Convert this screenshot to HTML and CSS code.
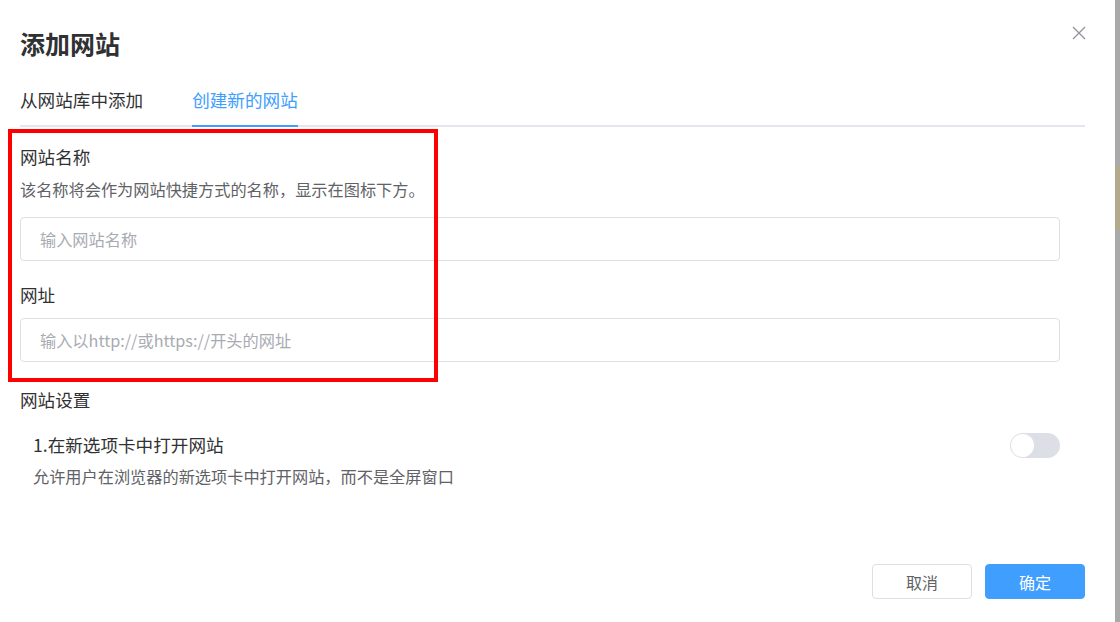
FILE: index.html
```html
<!DOCTYPE html>
<html lang="zh-CN">
<head>
    <meta charset="UTF-8">
    <title>添加网站</title>
    <link rel="stylesheet" href="styles.css">
</head>
<body>
    <div class="dialog">
        <div class="dialog-header">
            <h2 class="dialog-title">添加网站</h2>
            <span class="close">
                <svg width="14" height="14" viewBox="0 0 14 14"><path d="M1 1L13 13M13 1L1 13" stroke="#909399" stroke-width="1.3" fill="none"/></svg>
            </span>
        </div>

        <div class="tabs">
            <div class="tab">从网站库中添加</div>
            <div class="tab active">创建新的网站</div>
        </div>

        <div class="form">
            <div class="form-group">
                <label class="label">网站名称</label>
                <div class="desc">该名称将会作为网站快捷方式的名称，显示在图标下方。</div>
                <input type="text" class="input" placeholder="输入网站名称">
            </div>

            <div class="form-group">
                <label class="label">网址</label>
                <input type="text" class="input" placeholder="输入以http://或https://开头的网址">
            </div>

            <div class="section-title">网站设置</div>

            <div class="setting">
                <div class="setting-text">
                    <div class="setting-name">1.在新选项卡中打开网站</div>
                    <div class="setting-desc">允许用户在浏览器的新选项卡中打开网站，而不是全屏窗口</div>
                </div>
                <div class="switch"><span class="knob"></span></div>
            </div>
        </div>

        <div class="footer">
            <button class="btn">取消</button>
            <button class="btn primary">确定</button>
        </div>

        <!-- annotation box -->
        <div class="highlight"></div>
    </div>
    <div class="backdrop-mark"></div>
</body>
</html>
```

FILE: styles.css
```css
body {
    margin: 0;
    background-color: #a9a9a9;
    font-family: "Microsoft YaHei", "Noto Sans CJK SC", sans-serif;
    color: #303133;
    overflow: hidden;
}

.dialog {
    position: relative;
    width: 1115px;
    height: 622px;
    background-color: #fff;
    box-sizing: border-box;
    padding: 0 30px 0 20px;
}

.dialog-header {
    display: flex;
    justify-content: space-between;
    align-items: flex-start;
    padding-top: 26px;
}

.dialog-title {
    margin: 0;
    font-size: 25px;
    font-weight: bold;
    line-height: 34px;
    color: #303133;
}

.close {
    margin-top: -5px;
    margin-right: -1px;
    cursor: pointer;
}

.tabs {
    display: flex;
    gap: 49px;
    margin-top: 27px;
    border-bottom: 2px solid #e4e7ed;
}

.tab {
    font-size: 17.6px;
    line-height: 26px;
    padding-bottom: 12px;
    margin-bottom: -2px;
    border-bottom: 2px solid transparent;
    color: #303133;
}

.tab.active {
    color: #409eff;
    border-bottom-color: #409eff;
}

.form {
    padding-right: 25px;
}

.form-group {
    margin-top: 17px;
}

.label {
    display: block;
    font-size: 17.6px;
    line-height: 26px;
    color: #303133;
}

.desc {
    margin-top: 8px;
    font-size: 16.2px;
    line-height: 22px;
    color: #606266;
}

.input {
    display: block;
    width: 100%;
    box-sizing: border-box;
    height: 44px;
    margin-top: 17px;
    padding: 0 19px;
    border: 1px solid #dcdfe6;
    border-radius: 4px;
    font-family: inherit;
    font-size: 16.2px;
    color: #606266;
    outline: none;
}

.form-group + .form-group {
    margin-top: 21px;
}

.form-group + .form-group .input {
    margin-top: 10px;
}

.input::placeholder {
    color: #a8abb2;
}

.section-title {
    margin-top: 25px;
    font-size: 17.6px;
    line-height: 26px;
    color: #303133;
}

.setting {
    display: flex;
    justify-content: space-between;
    align-items: flex-start;
    padding-left: 13px;
    margin-top: 19px;
}

.setting-name {
    font-size: 17.6px;
    line-height: 26px;
    color: #303133;
}

.setting-desc {
    margin-top: 7px;
    font-size: 16.2px;
    line-height: 22px;
    color: #606266;
}

.switch {
    position: relative;
    width: 50px;
    height: 25px;
    margin-top: 1px;
    border-radius: 13px;
    background-color: #dcdfe6;
}

.knob {
    position: absolute;
    left: 1px;
    top: 1px;
    width: 23px;
    height: 23px;
    border-radius: 50%;
    background-color: #fff;
}

.footer {
    position: absolute;
    right: 30px;
    bottom: 23px;
    display: flex;
    gap: 13px;
}

.btn {
    width: 100px;
    height: 35px;
    border: 1px solid #dcdfe6;
    border-radius: 4px;
    background-color: #fff;
    color: #606266;
    font-family: inherit;
    font-size: 16px;
    cursor: pointer;
}

.btn.primary {
    background-color: #409eff;
    border-color: #409eff;
    color: #fff;
}

.highlight {
    position: absolute;
    left: 8px;
    top: 129px;
    width: 422px;
    height: 245px;
    border: 4px solid #ff0000;
    pointer-events: none;
}

.backdrop-mark {
    position: absolute;
    left: 1115px;
    top: 166px;
    width: 5px;
    height: 64px;
    background-color: #b3aa8c;
}
```
